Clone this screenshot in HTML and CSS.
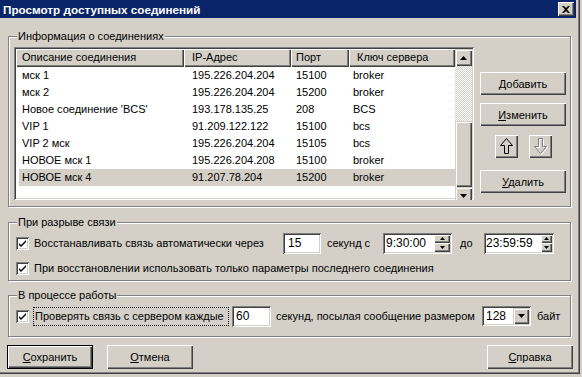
FILE: index.html
```html
<!DOCTYPE html>
<html>
  <head>
    <title>Просмотр доступных соединений</title>
    <link rel="stylesheet" href="styles.css">
  </head>

  <body>
    <div class="window">
      <div class="caption">
        <span class="caption__text">Просмотр доступных соединений</span>
        <div class="caption__close">
          <svg width="8" height="7" viewBox="0 0 8 7"><path d="M0 0h2l2 2 2-2h2L5 3.5 8 7H6L4 5 2 7H0l3-3.5z" fill="#000"/></svg>
        </div>
      </div>

      <div class="client">
        <div class="group group--list">
          <div class="group__title">Информация о соединениях</div>
          <div class="list-body">
            <div class="listview">
              <div class="listview__main">
                <div class="lv-head">
                  <div class="lv-hcell c1">Описание соединения</div>
                  <div class="lv-hcell c2">IP-Адрес</div>
                  <div class="lv-hcell c3">Порт</div>
                  <div class="lv-hcell c4">Ключ сервера</div>
                </div>
                <div class="lv-row"><span class="c1">мск 1</span><span class="c2">195.226.204.204</span><span class="c3">15100</span><span class="c4">broker</span></div>
                <div class="lv-row"><span class="c1">мск 2</span><span class="c2">195.226.204.204</span><span class="c3">15200</span><span class="c4">broker</span></div>
                <div class="lv-row"><span class="c1">Новое соединение 'BCS'</span><span class="c2">193.178.135.25</span><span class="c3">208</span><span class="c4">BCS</span></div>
                <div class="lv-row"><span class="c1">VIP 1</span><span class="c2">91.209.122.122</span><span class="c3">15100</span><span class="c4">bcs</span></div>
                <div class="lv-row"><span class="c1">VIP 2 мск</span><span class="c2">195.226.204.204</span><span class="c3">15105</span><span class="c4">bcs</span></div>
                <div class="lv-row"><span class="c1">НОВОЕ мск 1</span><span class="c2">195.226.204.208</span><span class="c3">15100</span><span class="c4">broker</span></div>
                <div class="lv-row lv-row--sel"><span class="c1">НОВОЕ мск 4</span><span class="c2">91.207.78.204</span><span class="c3">15200</span><span class="c4">broker</span></div>
              </div>
              <div class="vscroll">
                <div class="vscroll__btn">
                  <svg width="7" height="4" viewBox="0 0 7 4"><path d="M3.5 0L7 4H0z" fill="#000"/></svg>
                </div>
                <div class="vscroll__track"></div>
                <div class="vscroll__thumb"></div>
                <div class="vscroll__btn">
                  <svg width="7" height="4" viewBox="0 0 7 4"><path d="M0 0h7L3.5 4z" fill="#000"/></svg>
                </div>
              </div>
            </div>

            <div class="side">
              <div class="btn btn--add"><span><u>Д</u>обавить</span></div>
              <div class="btn btn--edit"><span><u>И</u>зменить</span></div>
              <div class="arrows">
                <div class="btn btn--sq">
                  <svg width="23" height="23" viewBox="0 0 23 23"><path d="M11.5 3.5L5.5 10.5H9.5V18.5H13.5V10.5H17.5Z" fill="none" stroke="#000"/></svg>
                </div>
                <div class="btn btn--sq">
                  <svg width="23" height="23" viewBox="0 0 23 23">
                    <path d="M12.5 19.5L6.5 12.5H10.5V4.5H14.5V12.5H18.5Z" fill="none" stroke="#fff"/>
                    <path d="M11.5 18.5L5.5 11.5H9.5V3.5H13.5V11.5H17.5Z" fill="none" stroke="#808080"/>
                  </svg>
                </div>
              </div>
              <div class="btn btn--del"><span><u>У</u>далить</span></div>
            </div>
          </div>
        </div>

        <div class="group group--break">
          <div class="group__title">При разрыве связи</div>
          <div class="row row--first">
            <label class="check check--wide">
              <span class="check__box"><svg width="9" height="9" viewBox="0 0 9 9"><path d="M1 4l2 2 5-5v2L3 8 1 6z" fill="#000"/></svg></span>
              <span>Восстанавливать связь автоматически через</span>
            </label>
            <div class="edit edit--15">15</div>
            <span class="caption-sec">секунд с</span>
            <div class="spin spin--from">
              <span class="spin__val">9:30:00</span>
              <div class="spin__btns">
                <div class="spin__b"><svg width="5" height="3" viewBox="0 0 5 3"><path d="M2.5 0L5 3H0z" fill="#000"/></svg></div>
                <div class="spin__b"><svg width="5" height="3" viewBox="0 0 5 3"><path d="M0 0h5L2.5 3z" fill="#000"/></svg></div>
              </div>
            </div>
            <span class="caption-to">до</span>
            <div class="spin spin--to">
              <span class="spin__val">23:59:59</span>
              <div class="spin__btns">
                <div class="spin__b"><svg width="5" height="3" viewBox="0 0 5 3"><path d="M2.5 0L5 3H0z" fill="#000"/></svg></div>
                <div class="spin__b"><svg width="5" height="3" viewBox="0 0 5 3"><path d="M0 0h5L2.5 3z" fill="#000"/></svg></div>
              </div>
            </div>
          </div>
          <div class="row row--second">
            <label class="check">
              <span class="check__box"><svg width="9" height="9" viewBox="0 0 9 9"><path d="M1 4l2 2 5-5v2L3 8 1 6z" fill="#000"/></svg></span>
              <span>При восстановлении использовать только параметры последнего соединения</span>
            </label>
          </div>
        </div>

        <div class="group group--work">
          <div class="group__title">В процессе работы</div>
          <div class="row row--first">
            <label class="check">
              <span class="check__box"><svg width="9" height="9" viewBox="0 0 9 9"><path d="M1 4l2 2 5-5v2L3 8 1 6z" fill="#000"/></svg></span>
              <span class="focus">Проверять связь с сервером каждые</span>
            </label>
            <div class="edit edit--60">60</div>
            <span class="caption-msg">секунд, посылая сообщение размером</span>
            <div class="combo">
              <span class="combo__val">128</span>
              <div class="combo__btn"><svg width="7" height="4" viewBox="0 0 7 4"><path d="M0 0h7L3.5 4z" fill="#000"/></svg></div>
            </div>
            <span class="caption-byte">байт</span>
          </div>
        </div>

        <div class="footer">
          <div class="btn btn--default"><span><u>С</u>охранить</span></div>
          <div class="btn btn--cancel"><span><u>О</u>тмена</span></div>
          <div class="btn btn--help"><span><u>С</u>правка</span></div>
        </div>
      </div>
    </div>
  </body>
</html>
```

FILE: styles.css
```css
* {
  box-sizing: border-box;
  margin: 0;
  padding: 0;
}

body {
  background: #d4d0c8;
  font-family: "Liberation Sans", Arial, sans-serif;
  font-size: 11px;
  color: #000;
}

u {
  text-decoration: underline;
  text-underline-offset: 1px;
}

.window {
  width: 580px;
  height: 374px;
  padding-right: 4px;
  background: #d4d0c8;
  box-shadow: inset -1px -1px #404040, inset -2px -2px #808080;
}

/* title bar */
.caption {
  display: flex;
  align-items: center;
  justify-content: space-between;
  height: 18px;
  padding: 0 2px 0 3px;
  background: #0a246a;
}

.caption__text {
  color: #fff;
  font-weight: bold;
  font-size: 11.7px;
}

.caption__close {
  display: flex;
  align-items: center;
  justify-content: center;
  width: 16px;
  height: 14px;
  background: #d4d0c8;
  box-shadow: inset 1px 1px #fff, inset -1px -1px #404040, inset -2px -2px #808080;
}

.client {
  display: flex;
  flex-direction: column;
  padding: 0 3px 0 7px;
}

/* group boxes */
.group {
  display: flex;
  flex-direction: column;
  margin: 0 2px 0 1px;
  border: 1px solid #808080;
  box-shadow: inset 1px 1px #fff, 1px 1px #fff;
}

.group__title {
  width: fit-content;
  margin: -7px 0 0 8px;
  padding: 0 1px;
  line-height: 13px;
  background: #d4d0c8;
}

.group--list {
  margin-top: 18px;
}

.group--break {
  margin-top: 15px;
  padding-bottom: 4px;
}

.group--work {
  margin-top: 14px;
  padding-bottom: 9px;
}

.list-body {
  display: flex;
  gap: 6px;
  padding: 4px 4px 6px 5px;
}

/* list view */
.listview {
  display: flex;
  width: 460px;
  height: 153px;
  padding: 2px;
  overflow: hidden;
  background: #fff;
  box-shadow: inset 1px 1px #808080, inset -1px -1px #fff, inset 2px 2px #404040, inset -2px -2px #d4d0c8;
}

.listview__main {
  width: 439px;
}

.lv-head {
  display: flex;
  height: 18px;
}

.lv-hcell {
  height: 18px;
  line-height: 17px;
  background: #d4d0c8;
  box-shadow: inset 1px 1px #fff, inset -1px -1px #404040, inset -2px -2px #808080;
}

.lv-hcell.c1 { width: 168px; padding-left: 6px; }
.lv-hcell.c2 { width: 107px; padding-left: 8px; }
.lv-hcell.c3 { width: 58px; padding-left: 5px; }
.lv-hcell.c4 { width: 106px; padding-left: 8px; }

.lv-row {
  display: flex;
  height: 17px;
  line-height: 17px;
  margin-left: 3px;
  white-space: nowrap;
}

.lv-row--sel {
  background: #d4d0c8;
}

.lv-row .c1 { width: 165px; padding-left: 3px; }
.lv-row .c2 { width: 107px; padding-left: 8px; }
.lv-row .c3 { width: 58px; padding-left: 5px; }
.lv-row .c4 { width: 106px; padding-left: 4px; }

.vscroll {
  display: flex;
  flex-direction: column;
  flex-shrink: 0;
  width: 17px;
}

.vscroll__btn,
.vscroll__thumb {
  display: flex;
  align-items: center;
  justify-content: center;
  flex-shrink: 0;
  height: 17px;
  background: #d4d0c8;
  box-shadow: inset 1px 1px #d4d0c8, inset 2px 2px #fff, inset -1px -1px #404040, inset -2px -2px #808080;
}

.vscroll__track {
  height: 55px;
  flex-shrink: 0;
  background: repeating-conic-gradient(#fff 0 25%, #d4d0c8 0 50%) 0 0 / 2px 2px;
}

.vscroll__thumb {
  height: 66px;
}

/* buttons */
.btn {
  display: flex;
  align-items: center;
  justify-content: center;
  width: 86px;
  height: 23px;
  background: #d4d0c8;
  box-shadow: inset 1px 1px #fff, inset -1px -1px #404040, inset -2px -2px #808080;
}

.side {
  display: flex;
  flex-direction: column;
  width: 86px;
}

.btn--add { margin-top: 25px; }
.btn--edit { margin-top: 8px; }
.btn--del { margin-top: 12px; }

.arrows {
  display: flex;
  justify-content: center;
  gap: 11px;
  margin-top: 9px;
}

.btn--sq {
  width: 23px;
  height: 23px;
}

/* rows of controls */
.row {
  display: flex;
  align-items: center;
  padding-left: 7px;
  white-space: nowrap;
}

.row--first {
  height: 22px;
  margin-top: 3px;
}

.row--second {
  height: 16px;
  margin-top: 6px;
}

.check {
  display: flex;
  align-items: center;
  gap: 5px;
}

.check--wide {
  width: 267px;
}

.check__box {
  display: flex;
  align-items: center;
  justify-content: center;
  width: 13px;
  height: 13px;
  background: #fff;
  box-shadow: inset 1px 1px #808080, inset -1px -1px #fff, inset 2px 2px #404040, inset -2px -2px #d4d0c8;
}

.focus {
  width: 196px;
  margin-left: -1px;
  padding: 1px 1px 2px 1px;
  line-height: 14px;
  border: 1px dotted #000;
}

.edit,
.spin,
.combo {
  display: flex;
  align-items: center;
  height: 21px;
  padding: 2px;
  background: #fff;
  box-shadow: inset 1px 1px #808080, inset -1px -1px #fff, inset 2px 2px #404040, inset -2px -2px #d4d0c8;
}

.edit {
  padding-left: 5px;
  font-size: 12px;
}

.edit--15 { width: 38px; }

.edit--60 {
  width: 39px;
  margin-left: 3px;
  padding-left: 4px;
}

.caption-sec {
  width: 62px;
  padding-left: 6px;
}

.caption-to {
  width: 32px;
  padding-left: 8px;
}

.caption-msg {
  width: 211px;
  padding-left: 5px;
}

.caption-byte {
  padding-left: 6px;
}

.spin--from { width: 69px; }
.spin--to { width: 70px; }

.spin__val {
  flex: 1;
  padding-right: 8px;
  text-align: right;
  font-size: 12px;
}

.spin__btns {
  display: flex;
  flex-direction: column;
  width: 16px;
  height: 17px;
}

.spin__b {
  display: flex;
  align-items: center;
  justify-content: center;
  height: 8.5px;
  background: #d4d0c8;
  box-shadow: inset 1px 1px #fff, inset -1px -1px #404040, inset -2px -2px #808080;
}

.combo {
  width: 49px;
  height: 20px;
}

.combo__val {
  flex: 1;
  padding-left: 2px;
  font-size: 12px;
}

.combo__btn {
  display: flex;
  align-items: center;
  justify-content: center;
  width: 16px;
  height: 16px;
  background: #d4d0c8;
  box-shadow: inset 1px 1px #d4d0c8, inset 2px 2px #fff, inset -1px -1px #404040, inset -2px -2px #808080;
}

/* footer buttons */
.footer {
  display: flex;
  margin-top: 8px;
}

.footer .btn {
  height: 24px;
}

.btn--default {
  box-shadow: inset 0 0 0 1px #000, inset 2px 2px #fff, inset -2px -2px #404040, inset -3px -3px #808080;
}

.btn--cancel {
  margin-left: 14px;
}

.btn--help {
  margin-left: auto;
}
```
